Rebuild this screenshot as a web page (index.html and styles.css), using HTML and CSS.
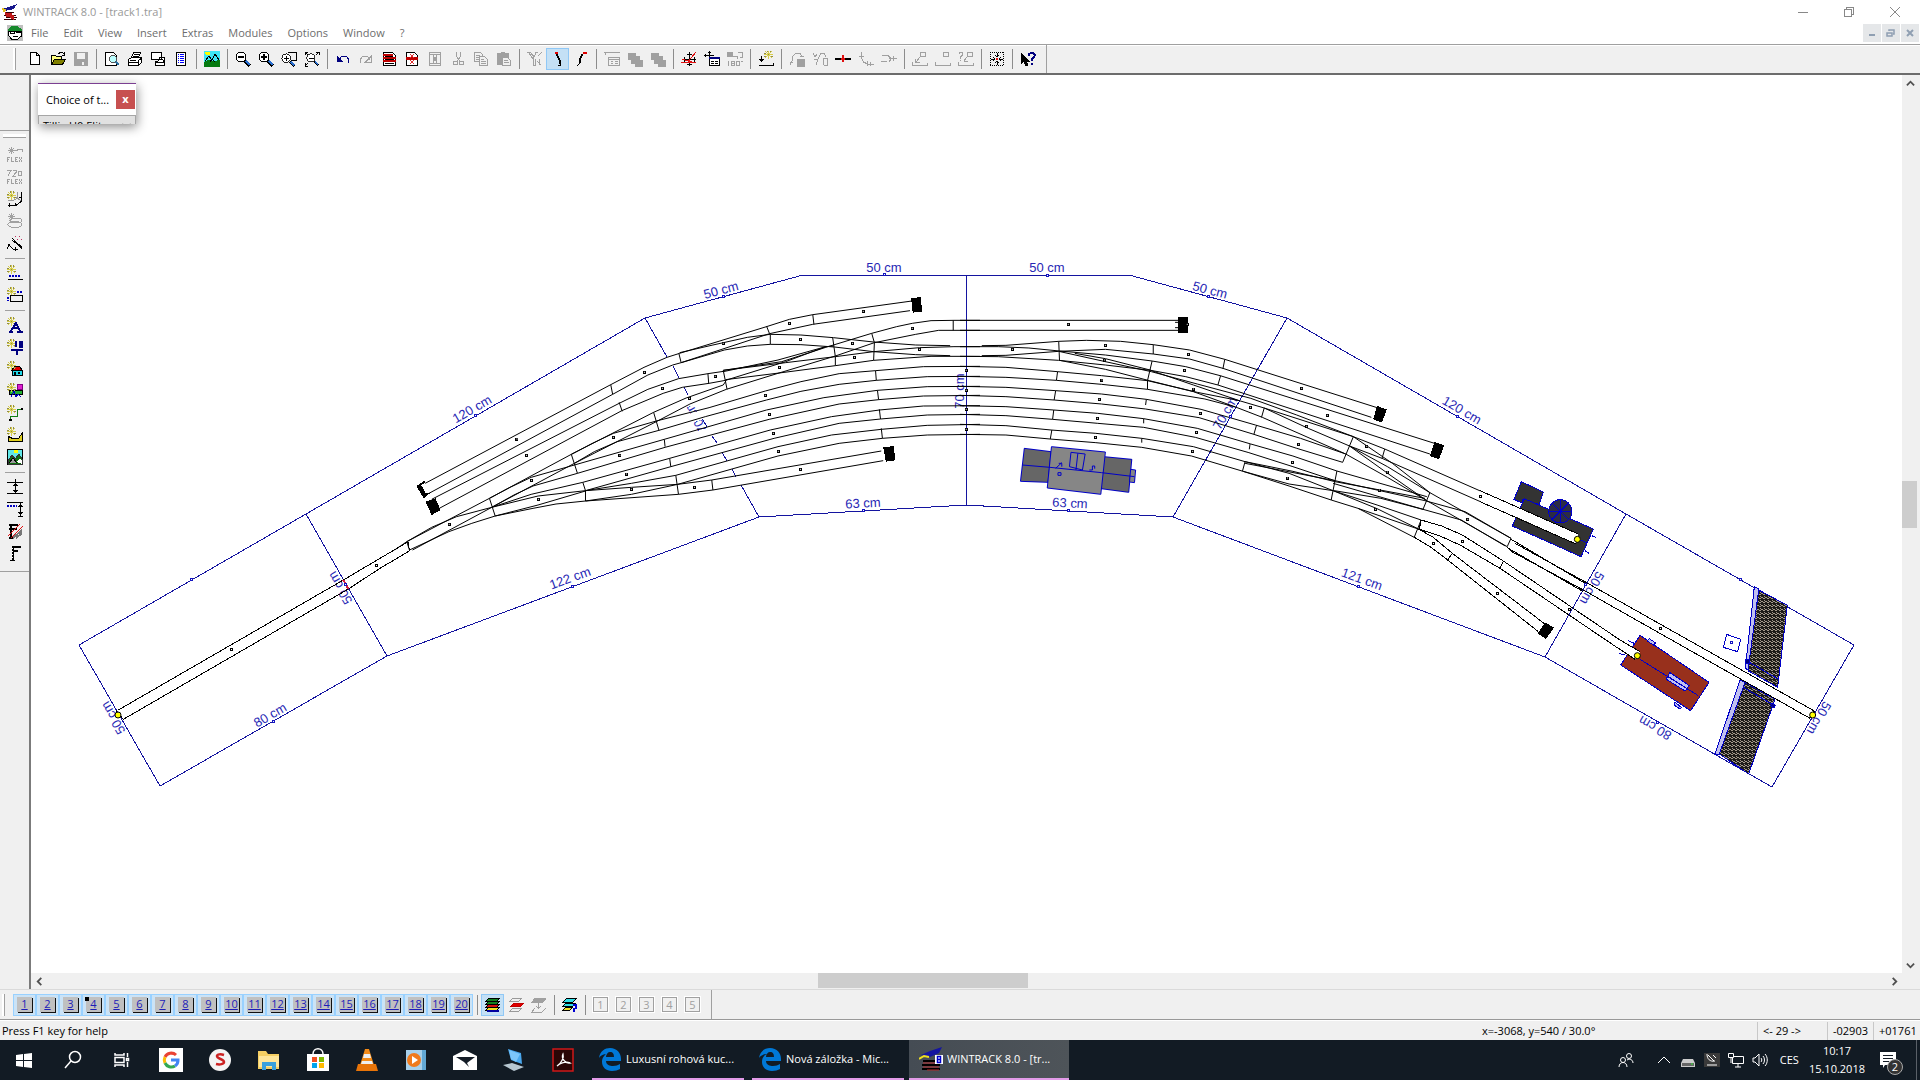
FILE: index.html
```html
<!DOCTYPE html>
<html lang="en">
<head>
<meta charset="utf-8">
<title>WINTRACK 8.0 - [track1.tra]</title>
<link rel="stylesheet" href="styles.css">
</head>
<body>
<svg class="defs" aria-hidden="true">
  <symbol id="star" viewBox="0 0 16 16"><path d="M4.500 0v9M0 4.500h9M1 1l7 7M8 1l-7 7" stroke="#d8cf4a"/><path d="M3 0v2M6 0v2M0 3h2M7 6h2M0 6h2M4 4h1" stroke="#8f8a4a"/></symbol>
  <symbol id="lens" viewBox="0 0 16 16"><circle cx="6" cy="6" r="5" stroke="#000" fill="#fff"/><path d="M10 10l5 5" stroke="#000" stroke-width="3"/><path d="M11 10l4 4" stroke="#2a6fd0" stroke-width="2"/></symbol>
  <symbol id="edge" viewBox="0 0 24 24"><path d="M1 11C2 4 7 1 12 1c7 0 11 5 11 11v2H8c0 4 4 5 7 5 3 0 5-1 7-2v5c-2 1-5 2-8 2C8 24 4 20 4 15c0-4 2-7 5-8-4 0-7 2-8 4zM8 10h8c0-3-1-5-4-5-2 0-4 2-4 5z" fill="#0078d7"/></symbol>
</svg>

<header class="titlebar">
  <svg class="logo" viewBox="0 0 16 16"><path d="M1 5l8-3 6-2-3 5-9 2z" fill="#16168c"/><path d="M0 5l3 1-1 2" stroke="#e0c020" stroke-width="2"/><path d="M4 8h8M2 11h12M4 13h11M2 15h12" stroke="#300"/><path d="M3 9l9 6M4 12h8M4 10h6" stroke="#c01818" stroke-width="2"/></svg>
  <h1>WINTRACK 8.0 - [track1.tra]</h1>
  <div class="winctl">
    <button aria-label="Minimize"><svg viewBox="0 0 12 12"><path d="M1 6.500h10"/></svg></button>
    <button aria-label="Restore"><svg viewBox="0 0 12 12"><path d="M1.500 3.500h7v7h-7zM3.500 3v-1.500h7v7h-1.500"/></svg></button>
    <button aria-label="Close"><svg class="smooth" viewBox="0 0 12 12"><path d="M1 1l10 10M11 1L1 11"/></svg></button>
  </div>
</header>

<nav class="menubar">
  <svg class="logo" viewBox="0 0 16 16"><path d="M0 0h16v16H0z" fill="#c0c0c0"/><path d="M1 4l4-3h5l5 3v2H1z" fill="#178a2c"/><path d="M2 6h12l1 4-5 5-6-1-3-5z" fill="#fff" stroke="#000"/><path d="M3 6h4v2H3zM9 6h4v1H9zM6 11h5M4 13l2 2M13 11l2 1" stroke="#000"/></svg>
  <button>File</button><button>Edit</button><button>View</button><button>Insert</button><button>Extras</button><button>Modules</button><button>Options</button><button>Window</button><button>?</button>
  <div class="mdictl">
    <button aria-label="Minimize document"><svg viewBox="0 0 10 10"><path d="M2 7h6" stroke-width="2"/></svg></button>
    <button aria-label="Restore document"><svg viewBox="0 0 10 10"><path d="M1 5h5v3H1zM3 3V2h5v4H7" stroke-width="1.500"/></svg></button>
    <button aria-label="Close document"><svg viewBox="0 0 10 10"><path d="M2 2l6 6M8 2L2 8" stroke-width="2"/></svg></button>
  </div>
</nav>

<div class="toolbar" role="toolbar" aria-label="Standard">
  <span class="grip"></span>
  <button aria-label="New"><svg viewBox="0 0 16 16"><path d="M3.500 1.500h6l3 3v9h-9zM9.500 1.500v3h3" fill="#fff"/></svg></button>
  <button aria-label="Open"><svg viewBox="0 0 16 16"><path d="M1.500 13.500v-9h4l1 1h5v3" fill="#ffff80"/><path d="M1.500 13.500l3-5h11l-3 5z" fill="#808000"/><path d="M8.500 2.500l2-1h2l2 2M14.500 1v3h-3"/></svg></button>
  <button aria-label="Save" disabled><svg viewBox="0 0 16 16"><path d="M1 1h14v14H1z" fill="#a0a0a0" stroke="none"/><path d="M4 2h8v6H4zM9 11h2v3H9z" fill="#f0f0f0" stroke="none"/></svg></button>
  <span class="sep"></span>
  <button aria-label="Print preview"><svg viewBox="0 0 16 16"><path d="M1.500 1.500h8l3 3v10h-11z" fill="#fff"/><circle cx="9" cy="8" r="3.500" fill="#bff" stroke="#555"/><path d="M12 11l3 3" stroke="#2a6fa0" stroke-width="2"/></svg></button>
  <button aria-label="Print"><svg viewBox="0 0 16 16"><path d="M4.500 6.500l2-5h7l-2 5M1.500 8.500l3-2h10v5l-3 3h-10z" fill="#fff"/><path d="M1 11.500h11M11.500 14V9M7 3.500h5M6 5.500h5M3 9.500h6M12 9l3-2"/></svg></button>
  <button aria-label="Print screens"><svg viewBox="0 0 16 16"><path d="M1.500 1.500h10v7h-10zM4.500 10.500h3M7.500 11.500l2-5h5l-1 5M5.500 11.500h9v3h-9z" fill="#fff"/><path d="M9 8.500h4M14 8l1 4"/></svg></button>
  <button aria-label="Parts list"><svg viewBox="0 0 16 16"><path d="M3.500 1.500h9v13h-9z" fill="#fff"/><path d="M5 3.500h1M7 3.500h4M5 5.500h1M7 5.500h4M5 7.500h1M7 7.500h4M5 9.500h1M7 9.500h4M5 11.500h1M7 11.500h4" stroke="#00f"/></svg></button>
  <span class="sep"></span>
  <button aria-label="3D view"><svg viewBox="0 0 16 16"><path d="M0 0h16v16H0z" fill="#3ee6f5" stroke="none"/><path d="M0 11l4-2 5 1 7-1v7H0z" fill="#067a10" stroke="none"/><path d="M1 1h5v3H2z" fill="#ff0" stroke="none"/><path d="M1 10l4-5 3 4 3-6 4 6M6 11l2-3 3 3"/></svg></button>
  <span class="sep"></span>
  <button aria-label="Zoom out"><svg viewBox="0 0 16 16"><use href="#lens"/><path d="M3 6h6" stroke-width="2"/></svg></button>
  <button aria-label="Zoom in"><svg viewBox="0 0 16 16"><use href="#lens"/><path d="M3 6h6M6 3v6" stroke-width="2"/></svg></button>
  <button aria-label="Zoom window"><svg viewBox="0 0 16 16"><path d="M6.500 1.500h9v8h-6" /><use href="#lens" y="2" width="14" height="14"/><path d="M3 7.500h5M5.500 5v5"/></svg></button>
  <button aria-label="Zoom all"><svg viewBox="0 0 16 16"><use href="#lens" x="2" y="2" width="13" height="13"/><path d="M5 7.500h5M1 4V1h3M12 1h3v3M1 12v3h3M1 1l3 3M15 1l-3 3M1 15l3-3"/></svg></button>
  <span class="sep"></span>
  <button aria-label="Undo"><svg viewBox="0 0 16 16"><path d="M4 9l2-3 3-1 3 1 2 3-1 3" stroke="#00007f"/><path d="M2 5v6h6z" fill="#00007f" stroke="none"/></svg></button>
  <button aria-label="Redo" disabled><svg viewBox="0 0 16 16"><path d="M12 9l-2-3-3-1-3 1-2 3 1 3M13.500 5v6h-6z"/></svg></button>
  <button aria-label="Delete track"><svg viewBox="0 0 16 16"><path d="M2.500 1.500h9l3 3v10h-12z" fill="#fff"/><path d="M2 4h10M2 7h13M2 10h13" stroke="#c00000" stroke-width="2"/><path d="M4 5.500h8M4 8.500h9M4 12.500h9"/></svg></button>
  <button aria-label="Delete section"><svg viewBox="0 0 16 16"><path d="M2.500 1.500h8l3 3v10h-11z" fill="#fff"/><path d="M2 7.500h12" stroke="#c00000" stroke-width="3"/><path d="M6 3l4 4M10 3L6 7M6 9l4 4M10 9l-4 4" stroke="#e03030"/></svg></button>
  <button aria-label="Select section" disabled><svg viewBox="0 0 16 16"><path d="M2.500 1.500h11v13h-11zM2 3.500h12M2 12.500h12M6 4l4 8M10 4l-4 8M6.500 4v8M9.500 4v8"/></svg></button>
  <button aria-label="Cut" disabled><svg viewBox="0 0 16 16"><path d="M6.500 1v4l3 5M10.500 1v4l-3 5"/><circle cx="5.500" cy="12" r="2"/><circle cx="11.500" cy="12" r="2"/></svg></button>
  <button aria-label="Copy" disabled><svg viewBox="0 0 16 16"><path d="M1.500 1.500h6l2 2v7h-8zM3 4.500h4M3 6.500h3M3 8.500h3"/><path d="M6.500 5.500h5l3 3v6h-8z" fill="#f0f0f0"/><path d="M8 8.500h3M8 10.500h5M8 12.500h5"/></svg></button>
  <button aria-label="Paste" disabled><svg viewBox="0 0 16 16"><path d="M1 2h4V1h4v1h4v12H1z" fill="#a0a0a0" stroke="none"/><path d="M6.500 6.500h5l3 3v5h-8z" fill="#f0f0f0"/><path d="M8 9.500h4M8 11.500h5"/></svg></button>
  <span class="sep"></span>
  <button aria-label="Turnout" disabled><svg viewBox="0 0 16 16"><path d="M0 1.500h4M2 2l4 6M8 1.500h3M9 2L6 8M4 2l3 4M6.500 8v6M8.500 8v6M6 14.500h3M11 5l4-4M12 8v6M10 10l4 4"/></svg></button>
  <button class="on" aria-label="Curve left"><svg viewBox="0 0 16 16"><path d="M7 3l3 6v5H8M6 3l3 6v4" /><path d="M5 2h3" stroke="#e00000" stroke-width="2"/></svg></button>
  <button aria-label="Curve right"><svg viewBox="0 0 16 16"><path d="M10 3L7 9v3l-3 3M9 3L6 9v4"/><path d="M10 2h4" stroke="#e00000" stroke-width="2"/></svg></button>
  <span class="sep"></span>
  <button aria-label="Properties" disabled><svg viewBox="0 0 16 16"><path d="M0 1.500h16M1.500 1v3M4.500 6.500h11v8h-11zM5 8h10M7 10.500h2M11 10.500h3M7 12.500h2M11 12.500h3"/></svg></button>
  <button aria-label="To front" disabled><svg viewBox="0 0 16 16"><path d="M1 2h7v3h4v4h3v6H8v-3H4V8H1z" fill="#a0a0a0"/></svg></button>
  <button aria-label="To back" disabled><svg viewBox="0 0 16 16"><path d="M1 2h7v3h4v4h3v6H8v-3H4V8H1z" fill="#a0a0a0"/></svg></button>
  <span class="sep"></span>
  <button aria-label="Move"><svg viewBox="0 0 16 16"><path d="M8.500 1v14M1 8.500h14M6 3.500h5M6 13.500h5M3.500 6v5M13.500 6v5"/><path d="M0 11.500h15M6 12L15 1M1 8l13 4" stroke="#e01010"/></svg></button>
  <button aria-label="Move by value"><svg viewBox="0 0 16 16"><path d="M5.500 0v10M0 4.500h10M4 1.500h3M1.500 3v3"/><path d="M5.500 6.500h10v8h-10z" fill="#fff"/><path d="M5 7h11" stroke="#00007f" stroke-width="2"/><path d="M7 10.500h3M11 10.500h3M7 12.500h3M11 12.500h3"/></svg></button>
  <button aria-label="Rotate by 180 degrees" disabled><svg viewBox="0 0 16 16"><path d="M0 1h6v5H0z" fill="#a0a0a0" stroke="none"/><path d="M10.500 1.500h5v5h-3M5 5.500h5v2M1.500 10v5M4.500 10.500h3v4h-3zM5 12.500h3M9.500 10.500h3v4h-3zM14 10h2"/></svg></button>
  <span class="sep"></span>
  <button aria-label="New start point"><svg viewBox="0 0 16 16"><use href="#star" x="6" y="-1" width="16" height="16"/><path d="M.5 14.500h15v-3M3.500 5v6M1 8.500h5M2 9.500h3M3 10.500h1"/></svg></button>
  <span class="sep"></span>
  <button aria-label="Replace track" disabled><svg viewBox="0 0 16 16"><path d="M1 14l2-4 1-5 3-3M1 11h3M7 2h4l2 4M11 5h4" /><path d="M8 8h7v7H8z" fill="#a0a0a0"/></svg></button>
  <button aria-label="Split track" disabled><svg viewBox="0 0 16 16"><path d="M1 2l2 4 2-3M4 14l2-6 3-6M8 2h4l2 4M2 8h3M11 7h4v7h-3z"/></svg></button>
  <button aria-label="Joint"><svg viewBox="0 0 16 16"><path d="M0 8h16" stroke-width="2"/><path d="M8 4v7M6 8h4" stroke="#e01010" stroke-width="2"/></svg></button>
  <button aria-label="Connect with curve" disabled><svg viewBox="0 0 16 16"><path d="M1 5.500h5M3.500 1v6l2 4 4 2h7M9.500 10v5M12.500 11v4"/></svg></button>
  <button aria-label="Gap" disabled><svg viewBox="0 0 16 16"><path d="M1 4.500h6l2 3M0 10.500h6M8 5l2 3-2 3M9 7.500h7M12.500 5v5"/></svg></button>
  <span class="sep"></span>
  <button aria-label="Height" disabled><svg viewBox="0 0 16 16"><path d="M8.500 1.500h5v4h-5zM8 6l-4 5M3.500 8v3h4M.5 11v3.500h15v-3"/></svg></button>
  <button aria-label="Level" disabled><svg viewBox="0 0 16 16"><path d="M8.500 1.500h5v4h-5zM.5 11v3.500h15v-3"/></svg></button>
  <button aria-label="Height query" disabled><svg viewBox="0 0 16 16"><path d="M9.500 1.500h5v4h-5zM9 6l-3 4M.5 11v3.500h15v-3M1.500 3V1.500h3v3l-2 1v2M2.500 8.500v1M6.500 8v2h3"/></svg></button>
  <span class="sep"></span>
  <button aria-label="Centre"><svg viewBox="0 0 16 16"><path d="M1 1.500h14M1 14.500h14M1.500 1v14M14.500 1v14" stroke-dasharray="1 1"/><path d="M8 2v4M8 10v4M2 8h4M10 8h4M6 4l2 2 2-2M6 12l2-2 2 2M4 6l2 2-2 2M12 6l-2 2 2 2"/><path d="M7 8h2" stroke="#e01010" stroke-width="2"/></svg></button>
  <span class="sep"></span>
  <button aria-label="Context help"><svg viewBox="0 0 16 16"><path d="M1 2v11l3-3 2 5 2-1-2-4h3z" fill="#000"/><path d="M9 5V3l2-1h2l2 2-1 2-2 2v2M12 12v2" stroke="#00007f" stroke-width="2"/></svg></button>
  <span class="end"></span>
</div>

<main class="workspace">
  <aside class="sidebar" role="toolbar" aria-label="Insert">
    <span class="hgrip"></span>
    <button aria-label="Flex track" disabled><svg viewBox="0 0 16 16"><path d="M4.500 0v7M1 3.500h7M2 1l5 5M7 1L2 6M8 4l5-2h2v3M.5 10v5M1 10.500h2M1 12.500h1M4.500 10v4.500h2M8.500 10v5M9 10.500h2M9 12.500h1M9 14.500h2M12.500 10v2M14.500 10v2M13.500 12v1M12.500 13v2M14.500 13v2"/></svg></button>
    <button aria-label="Flex track with radius" disabled><svg viewBox="0 0 16 16"><path d="M0 1.500h4L1 7M6 1.500h3v2L6 7h3M11.500 2.500h3v4h-3zM.5 10v5M1 10.500h2M1 12.500h1M4.500 10v4.500h2M8.500 10v5M9 10.500h2M9 12.500h1M9 14.500h2M12.500 10v2M14.500 10v2M13.500 12v1M12.500 13v2M14.500 13v2"/></svg></button>
    <button aria-label="Parallel track"><svg viewBox="0 0 16 16"><path d="M1 9.500h5l4-2V1M9 6l5 4" stroke="#999"/><use href="#star"/><path d="M1 14.500h8l5-4V1M2.500 12v4M8.500 12v3M12 6h3"/></svg></button>
    <button aria-label="Helix" disabled><svg viewBox="0 0 16 16"><path d="M4.500 0v7M1 3.500h7M2 1l5 5M7 1L2 6"/><ellipse cx="9" cy="7.500" rx="6" ry="2.500"/><ellipse cx="8" cy="11.500" rx="7" ry="3"/></svg></button>
    <button aria-label="Wizard"><svg viewBox="0 0 16 16"><path d="M5 4l10 9" stroke-width="2"/><path d="M5 4l2 2" stroke="#fff"/><path d="M1 9l5 5h5M8.500 12v4M0 14l3-5"/><path d="M8 1h1M12 1h1M14 4h1M10 4h1" stroke="#c03060"/></svg></button>
    <span class="hsep"></span>
    <button aria-label="Line"><svg viewBox="0 0 16 16"><use href="#star"/><path d="M1 14.500h15"/><path d="M2 11h12" stroke="#0000c0" stroke-width="2" stroke-dasharray="2 1"/></svg></button>
    <button aria-label="Rectangle"><svg viewBox="0 0 16 16"><use href="#star"/><path d="M3.500 8.500h12v6h-12z"/><path d="M1 10v4M10 5h5" stroke="#0000c0" stroke-width="2" stroke-dasharray="2 1"/></svg></button>
    <span class="hsep"></span>
    <button aria-label="Text"><svg viewBox="0 0 16 16"><use href="#star"/><path d="M4 14l5-8 4 8M6 11h6M2 15h4M10 15h6" stroke="#00007f" stroke-width="2"/></svg></button>
    <button aria-label="Dimension"><svg viewBox="0 0 16 16"><use href="#star"/><path d="M9 2v6M12.500 2.500h2v5h-2z" stroke="#00007f" stroke-width="2"/><path d="M4 11h12M10 11v5" stroke="#00007f" stroke-width="2"/></svg></button>
    <button aria-label="Building"><svg viewBox="0 0 16 16"><path d="M5.500 9.500h10v5h-10z" fill="#20d8e8"/><path d="M4.500 9.500l3-4h5l3 4z" fill="#e00000"/><path d="M8 11v3M12 11v2" stroke-width="2"/><use href="#star"/></svg></button>
    <button aria-label="Landscape item"><svg viewBox="0 0 16 16"><path d="M2 7h13v4H2z" fill="#20b030"/><circle cx="13" cy="4" r="3" fill="#e020d0" stroke="#800080"/><use href="#star"/><path d="M4 14l3-6 2 6 2-3 3 3" stroke="#0000c0"/></svg></button>
    <button aria-label="Cable"><svg viewBox="0 0 16 16"><use href="#star"/><path d="M3.500 14v-2.500h7v-7h5" stroke="#108010"/><path d="M2 15h3M14 4h2" stroke-width="2"/></svg></button>
    <button aria-label="Contour"><svg viewBox="0 0 16 16"><path d="M1.500 9.500l4 2h6l4-6v9h-14z" fill="#e0d020"/><use href="#star"/></svg></button>
    <button aria-label="Picture"><svg viewBox="0 0 16 16"><path d="M.5 .5h15v15H.5z" fill="#60e8e8"/><path d="M1 12l4-6 3 4 4-5 3 5v5H1z" fill="#107010" stroke="#333"/><path d="M7 1h4v3H7z" fill="#ff0" stroke="none"/><path d="M2 14l4-5 4 5" fill="#999"/><path d="M10 13l3-4 2 3v3z" fill="#fff" stroke="none"/></svg></button>
    <span class="hsep"></span>
    <button aria-label="Vertical distance"><svg viewBox="0 0 16 16"><path d="M0 3.500h16M0 14.500h16M8.500 0v14M6 6.500h5M7 5.500h3M6 11.500h5M7 12.500h3"/></svg></button>
    <button aria-label="Clearance"><svg viewBox="0 0 16 16"><path d="M0 1.500h16M13.500 2v13M11 5.500h5M12 4.500h3M11 11.500h5M12 12.500h3M11 15.500h5"/><path d="M0 5h10" stroke="#0000c0" stroke-width="2" stroke-dasharray="2 1"/></svg></button>
    <button aria-label="Hide signals"><svg viewBox="0 0 16 16"><path d="M4 2v13M2 2h9M2 6h8M2 15h5" stroke-width="2"/><path d="M6 15l9-8M9 15l6-5" stroke="#777" stroke-width="2"/><path d="M1 13L13 1M4 15L16 3" stroke="#e01010"/></svg></button>
    <button aria-label="Signal"><svg viewBox="0 0 16 16"><path d="M6 1v14M3 15.500h5M5 2h9M5 5.500h6" stroke-width="2"/><path d="M5.500 3v11" stroke="#fff" stroke-dasharray="1 2"/></svg></button>
    <span class="hend"></span>
  </aside>

  <section class="document">
    <svg class="plan" viewBox="31 75 1871 898" role="img" aria-label="Track plan">
      <defs>
        <pattern id="gravel" width="12" height="12" patternUnits="userSpaceOnUse"><path d="M0 0h12v12H0z" fill="#1d1b18"/><path d="M1 0h2v1h1v2h-1v-1h-2zM6 1h1v2h2v1h-3zM10 0h1v3h-1zM0 4h1v3h2v1h-3zM4 5h2v1h1v2h-1v-1h-2zM9 5h2v2h-1v2h-1zM2 9h2v1h1v2h-1v-1h-2zM7 9h1v2h2v1h-3zM11 9h1v2h-1zM3 3h1v1h-1zM8 8h1v1h-1z" fill="#a2988a" stroke="none"/></pattern>
      </defs>

      <!-- baseboards -->
      <g class="blue">
        <path d="M79 645L306 514 645 318 803 275H1129L1287 318 1626 514 1854 645 1772 787 1545 657 1173 517 966 505 759 517 387 656 160 786z"/>
        <path d="M306 514L387 656M966 275V505M1287 318L1173 517M1626 514L1545 657"/>
        <path d="M645 318L667 357M673 366L679 378M684 387L688 395M702 418L707 427M712 436L717 443M722 452L727 461M732 469L736 477M741 485L759 517"/>
      </g>
      <g class="dim">
        <text transform="translate(884 267)">50 cm</text>
        <text transform="translate(1047 267)">50 cm</text>
        <text transform="translate(721 290) rotate(-15)">50 cm</text>
        <text transform="translate(1210 290) rotate(15)">50 cm</text>
        <text transform="translate(472 409) rotate(-30)">120 cm</text>
        <text transform="translate(1462 410) rotate(30)">120 cm</text>
        <text transform="translate(270 715) rotate(-30)">80 cm</text>
        <text transform="translate(1655 728) rotate(210)">80 cm</text>
        <text transform="translate(570 578) rotate(-20)">122 cm</text>
        <text transform="translate(1362 579) rotate(20)">121 cm</text>
        <text transform="translate(863 503) rotate(-3)">63 cm</text>
        <text transform="translate(1070 503) rotate(3)">63 cm</text>
        <text transform="translate(959 391) rotate(-90)">70 cm</text>
        <text transform="translate(1225 413) rotate(-60)">70 cm</text>
        <text transform="translate(695 417) rotate(-120)">70 cm</text>
        <text transform="translate(340 588) rotate(-120)">50 cm</text>
        <text transform="translate(113 718) rotate(-120)">50 cm</text>
        <text transform="translate(1592 588) rotate(120)">50 cm</text>
        <text transform="translate(1819 718) rotate(120)">50 cm</text>
      </g>
      <path class="cover" d="M660 428L730 406M668 445L735 424M680 405L720 391"/>

      <!-- left approach -->
      <svg x="60" y="440" width="380" height="360" viewBox="0 0 1140 1080">
        <path class="rail" d="M175 810L850 420 960 355 1045 305M190 838L865 447 960 385 1048 333M1045 305L1048 333M168 812L190 838"/>
        <path class="red" d="M850 420L865 447"/>
        <g class="dot"><path id="d1" d="M514 628h0M949 376h0"/></g><use href="#d1" class="pin"/>
        <circle class="lamp" cx="174" cy="825" r="9"/>
      </svg>

      <!-- station throat, left half -->
      <svg x="380" y="250" width="600" height="300" viewBox="0 0 1568 900" preserveAspectRatio="none">
        <path class="rail" d="M118 700L603 404 690 352 750 322 783 310 1010 230 1070 208 1131 194 1390 153M128 730L608 433 700 375 765 345 787 338 1018 251 1131 223 1385 182"/>
        <path class="rail" d="M783 308L870 285 960 262 1020 253 1100 255 1185 263 1290 276 1400 285 1490 287M787 338L900 300 960 288 1020 283 1100 284 1188 291 1290 305 1400 314 1490 317"/>
        <path class="rail" d="M135 748L625 460 700 418 780 386 857 371 898 364M155 775L632 482 740 430 790 412 860 400 903 391"/>
        <path class="rail" d="M897 361L1050 335 1165 292 1285 250 1350 230 1391 220 1440 212 1500 211H1568M905 418L1040 370 1190 318 1292 278 1400 253 1460 241H1568"/>
        <path class="rail" d="M897 361L1060 338 1190 320 1290 305 1410 293 1500 290H1568M903 389L1050 368 1190 347 1290 331 1440 319H1568M903 391L1060 335 1165 290M897 365L1040 330 1165 290 1185 288"/>
        <path class="rail" d="M38 900L70 875 286 745 500 613 715 487 800 444 897 405 905 391M85 900L292 772 508 640 722 515 810 462 905 418"/>
        <path class="rail" d="M70 875L135 832 200 800 292 772 395 733 530 697M77 900L180 845 240 820 301 798 413 765 537 723"/>
        <path class="rail" d="M286 745L340 712 395 682 508 645M292 772L350 735 400 708 516 670M500 613L555 580 610 550 722 513M508 640L560 605 620 575 729 541"/>
        <path class="rail" d="M292 772L413 738 537 722 657 712 778 703M301 798L400 775 460 762 537 753 780 733M537 722L657 700 773 676M537 753L657 733 778 703"/>
        <path class="rail" d="M778 703L867 690 1310 603M780 733L870 720 1315 632"/>
        <path class="rail" d="M722 513L860 473 1007 423 1100 395 1200 371 1295 362 1420 350 1568 349M729 541L850 500 1010 450 1100 424 1200 403 1297 391 1430 380 1568 379"/>
        <path class="rail" d="M508 645L743 568 1010 480 1160 443 1300 421 1430 410 1568 409M516 670L745 592 1017 508 1200 462 1303 449 1420 438 1568 436"/>
        <path class="rail" d="M530 697L757 625 1020 540 1180 500 1305 480 1420 468 1568 467M537 722L760 650 1030 565 1200 520 1308 507 1430 495 1568 493"/>
        <path class="rail" d="M773 676L1040 590 1180 555 1310 538 1430 526 1568 523M778 703L1040 618 1200 580 1313 565 1430 555 1568 553"/>
        <path class="rail" d="M603 404L608 433M781 310L787 338M1010 228L1018 251M1020 253V283M1131 194L1134 223M625 457L633 484M857 371L859 400M897 361L907 418M1183 263L1190 320V347M1285 250L1292 278 1290 331M1498 211V241M70 875L77 900M286 745L301 798M500 613L516 670M715 487L729 541M530 697L537 722V753M773 676L780 733M867 690L870 720M743 568L745 590M757 625L760 650M1295 362L1297 391M1300 421L1303 449M1305 478L1308 507M1310 535L1313 565"/>
        <path class="stop" d="M1388 145L1413 141 1417 185 1392 188zM1315 592L1342 588 1347 631 1322 635zM95 708L116 692 119 697 108 706 120 730 130 730 114 745zM119 755L145 745 158 780 135 795z"/>
        <g class="dot"><path id="d2" d="M691 367h0M358 567h0M383 616h0M738 415h0M876 379h0M897 280h0M1070 220h0M1263 184h0M1099 268h0M1235 280h0M1391 235h0M1240 322h0M1044 352h0M1410 298h0M809 445h0M1007 436h0M610 562h0M627 616h0M644 672h0M396 691h0M181 823h0M414 748h0M657 718h0M822 712h0M1099 658h0M1041 604h0M1028 550h0M1018 493h0M1532 361h0M1532 421h0M1532 478h0M1532 538h0"/></g><use href="#d2" class="pin"/>
      </svg>

      <!-- station throat, right half -->
      <svg x="960" y="250" width="600" height="320" viewBox="0 0 1568 960" preserveAspectRatio="none">
        <g class="shed">
          <path fill="#666" d="M168 595L238 605 230 697 158 694zM376 620L449 628 441 727 368 716z"/>
          <path fill="#868686" d="M239 590L380 606 368 733 228 714zM446 658L459 660 456 698 443 696z"/>
          <path fill="none" d="M163 645L235 652 370 668 456 680M290 607L327 612 320 660 286 650zM308 610L303 660M250 655L266 638M258 640h8v10M338 660h8v-12h6v8M256 668h8v8h-8z"/>
        </g>
        <path class="rail" d="M0 211H570M0 241H570M562 217h10M562 233h10"/>
        <path class="rail" d="M57 287L120 286 258 274 330 271 420 274 505 284 600 300 692 328 1090 473M57 317L120 316 258 304 380 298 505 312 600 327 687 355 1075 502"/>
        <path class="rail" d="M0 290L100 290 180 294 260 303 380 315 502 333 590 350 680 377 1240 580M0 319L100 320 258 331 380 345 498 361 590 380 674 405 1228 612"/>
        <path class="rail" d="M258 304L380 335 500 365 620 402 760 445 880 495 1028 560 1110 597 1360 723M260 331L380 358 495 392 610 425 720 471M498 361L610 405 730 452M300 310L380 326 500 361"/>
        <path class="rail" d="M0 349L120 352 255 365 370 377 490 392 620 427 730 452 795 474 910 535 1018 588 1103 625 1360 755M0 379L120 382 252 391 370 403 490 418 640 447 720 471 790 502 1008 612"/>
        <path class="rail" d="M0 409L120 412 250 422 370 432 487 448 630 478 772 525 890 565 1008 612M0 436L120 440 246 450 370 462 485 477 625 503 768 553 880 595 1000 637"/>
        <path class="rail" d="M0 467L120 470 245 480 360 490 480 506 620 535 760 582 870 618 985 663 1220 740M0 493L120 497 242 508 360 520 480 532 615 562 755 608 870 650 980 692 1215 752"/>
        <path class="rail" d="M0 523L120 527 238 540 355 550 475 565 610 590 745 635 870 664 980 695M0 553L120 555 235 567 355 578 475 592 605 618 740 664 860 708 970 750"/>
        <path class="rail" d="M795 474L1028 560 1130 640 1228 728 1440 865M1018 588L1117 650 1228 728M1008 612L1117 682 1220 752 1430 890M1018 588L1120 672 1220 752M1215 752L1320 785 1440 865M1210 778L1310 810 1425 888"/>
        <path class="rail" d="M745 635L860 670 975 722M740 664L860 702 975 722M745 640L980 692M980 695L1215 745M978 722L1100 745 1210 778M975 700L1210 778M975 722L1090 765 1205 810M970 750L1040 775 1187 862M975 722L1090 776 1200 838M1040 775L1200 838"/>
        <path class="rail" d="M258 274L260 331M505 284V312M692 328L687 357M502 333L490 392V418M681 377L674 405M795 474L788 502M1110 597L1103 625M1028 560L1000 637M1228 728L1210 778M1440 865L1430 890M255 365L252 391M250 422L246 450M487 448L485 465M775 525L768 553M245 480L242 508M480 506V520M758 582L756 598M985 663L970 750M240 540L236 567M475 565V578M745 635L738 664M1205 810L1187 862"/>
        <path class="stop" d="M570 201H596V248H570zM1090 468L1115 478 1103 518 1080 508zM1240 576L1265 586 1252 628 1228 618z"/>
        <g class="dot"><path id="d3" d="M283 223h0M594 223h0M380 286h0M137 298h0M378 330h0M597 313h0M587 361h0M371 390h0M610 417h0M893 415h0M960 496h0M759 472h0M906 529h0M1063 589h0M1360 739h0M364 448h0M628 490h0M885 583h0M1117 666h0M359 505h0M618 547h0M869 637h0M354 562h0M608 604h0M856 684h0M1096 720h0M1086 778h0M1327 808h0"/></g><use href="#d3" class="pin"/>
      </svg>

      <!-- lower right yard -->
      <svg x="1260" y="460" width="380" height="280" viewBox="0 0 1140 840">
        <path class="rail" d="M483 180L545 198 607 225 730 303 1080 540M478 208L540 228 600 255 720 325 1060 555M475 207L520 232 577 280 852 490M463 232L510 260 563 300 835 515M483 180L478 208M730 303L720 325M577 280L563 300M752 237L975 370M740 262L970 395"/>
        <path class="stop" d="M855 487L882 503 858 537 833 520z"/>
        <g class="dot"><path id="d4" d="M521 250h0M607 244h0M712 400h0M928 448h0"/></g><use href="#d4" class="pin"/>
      </svg>

      <!-- right approach and scenery -->
      <svg x="1480" y="450" width="400" height="350" viewBox="0 0 1200 1050">
        <g class="shed">
          <path fill="#333" d="M124 95L190 126 178 163 128 150 128 160 102 148z"/>
          <path fill="#333" d="M133 146L340 237 303 320 97 228z"/>
          <circle fill="#2c2c44" cx="241" cy="184" r="35"/>
          <path d="M206 184h70M241 149v70M216 159l50 50M266 159l-50 50M335 257l12 5M315 302l12 8M296 268l25 10"/>
          <path fill="#98301c" d="M480 556L687 697 632 782 422 645z"/>
          <path fill="#c0c0f0" d="M570 668L628 707 615 723 558 687zM508 566L527 579 520 585 502 573zM585 757L605 773 600 777 582 765z"/>
          <path d="M480 628L655 737M445 572l18 8M417 610l18 5M562 678L620 715"/>
          <path fill="#c0c0f0" d="M823 410L836 417 808 662 796 655zM780 690L795 697 718 914 705 912z"/>
          <path fill="url(#gravel)" d="M836 420L922 466 893 712 804 662zM795 697L885 748 806 972 718 912z"/>
          <path d="M800 632L895 688M790 712L882 766"/>
          <path fill="#fff" d="M740 553L782 568 773 605 730 592z"/>
          <path fill="#00007f" d="M797 628h12v12h-12zM874 760l12 5-4 8-10-5z"/>
        </g>
        <path fill="#fff" d="M60 146L295 252 288 282 55 176zM430 573L482 605 470 628 425 604z"/>
        <path class="rail" d="M0 122L295 252M0 155L288 282M420 570L480 605M400 585L465 628"/>
        <path class="rail" d="M105 280L318 397 1003 783M90 302L310 420 990 805M1003 783L990 805"/>
        <g class="dot"><path id="d5" d="M2 139h0M52 430h0M541 535h0"/></g><use href="#d5" class="pin"/>
        <circle class="lamp" cx="292" cy="268" r="9"/><circle class="lamp" cx="472" cy="617" r="9"/><circle class="lamp" cx="998" cy="795" r="9"/>
      </svg>

      <g class="dot bluedots"><path id="d6" d="M884 274h0M1047 275h0M723 296h0M475 415h0M191 579h0M273 721h0M572 586h0M863 510h0M1068 510h0M1208 296h0M1457 416h0M1740 579h0M1230 416h0M1358 586h0M1585 584h0M1657 722h0M345 584h0M1731 642h0"/></g><use href="#d6" class="pin"/>
    </svg>

    <div class="vscroll">
      <button aria-label="Scroll up"><svg viewBox="0 0 10 10"><path d="M1 7l4-4 4 4"/></svg></button>
      <span class="vthumb"></span>
      <button aria-label="Scroll down"><svg viewBox="0 0 10 10"><path d="M1 3l4 4 4-4"/></svg></button>
    </div>
    <div class="hscroll">
      <button aria-label="Scroll left"><svg viewBox="0 0 10 10"><path d="M7 1L3 5l4 4"/></svg></button>
      <span class="hthumb"></span>
      <button aria-label="Scroll right"><svg viewBox="0 0 10 10"><path d="M3 1l4 4-4 4"/></svg></button>
    </div>

    <div class="palette">
      <div class="palette-head"><span>Choice of t...</span><button aria-label="Close palette">x</button></div>
      <button class="palette-select"><span>Tillig H0 Elite</span><svg viewBox="0 0 10 10"><path d="M1 3l4 4 4-4"/></svg></button>
    </div>
  </section>
</main>

<div class="layerbar" role="toolbar" aria-label="Layers">
  <span class="grip"></span>
  <button class="layer"><b>1</b></button><button class="layer"><b>2</b></button><button class="layer"><b>3</b></button><button class="layer current"><b>4</b></button><button class="layer"><b>5</b></button><button class="layer"><b>6</b></button><button class="layer"><b>7</b></button><button class="layer"><b>8</b></button><button class="layer"><b>9</b></button><button class="layer"><b>10</b></button><button class="layer"><b>11</b></button><button class="layer"><b>12</b></button><button class="layer"><b>13</b></button><button class="layer"><b>14</b></button><button class="layer"><b>15</b></button><button class="layer"><b>16</b></button><button class="layer"><b>17</b></button><button class="layer"><b>18</b></button><button class="layer"><b>19</b></button><button class="layer"><b>20</b></button>
  <span class="sep"></span>
  <button class="on" aria-label="All layers"><svg viewBox="0 0 16 16"><path d="M4 1h11l-3 3H1z" fill="#108020"/><path d="M4 4h11l-3 3H1z" fill="#108020"/><path d="M4 7h11l-3 3H1z" fill="#d01010"/><path d="M4 10h11l-3 3H1z" fill="#f0e020"/><path d="M2 14h12" stroke="#0000a0" stroke-width="2"/></svg></button>
  <button aria-label="Active layer"><svg viewBox="0 0 16 16"><path d="M4.500 1.500h9l-3 3h-9zM4.500 11.500h9l-3 3h-9z" stroke="#999"/><path d="M5.500 6.500h10l-3 3h-10z" fill="#e00000" stroke="#c00000"/></svg></button>
  <button aria-label="Move to layer" disabled><svg viewBox="0 0 16 16"><path d="M4 1h11l-3 4H1z" fill="#a0a0a0"/><path d="M7.500 6v5M5 9l2.500 2L10 9M4 11l-3 4h10l4-4"/></svg></button>
  <span class="sep"></span>
  <button aria-label="Layer settings"><svg viewBox="0 0 16 16"><path d="M5 1h10l-4 4H1z" fill="#30e0e8"/><path d="M4 6h10l-3 3H1z" fill="#30e0e8"/><path d="M4 10h7l-3 3H1z" fill="#f0e020"/><path d="M11 8h3v3l-2 1v3" stroke="#0000d0" stroke-width="2"/></svg></button>
  <span class="sep"></span>
  <button class="view" disabled><i>1</i></button><button class="view" disabled><i>2</i></button><button class="view" disabled><i>3</i></button><button class="view" disabled><i>4</i></button><button class="view" disabled><i>5</i></button>
  <span class="end"></span>
</div>

<div class="statusbar">
  <span class="hint">Press F1 key for help</span>
  <span class="coords">x=-3068, y=540 / 30.0°</span>
  <span class="cell c1">&lt;- 29 -&gt;</span>
  <span class="cell c2">-02903</span>
  <span class="cell c3">+01761</span>
</div>

<footer class="taskbar">
  <div class="pins">
    <button aria-label="Start"><svg viewBox="0 0 24 24"><path d="M4 7l7-1v6H4zM12 6l8-1v7h-8zM4 13h7v6l-7-1zM12 13h8v7l-8-1z" fill="#fff"/></svg></button>
    <button aria-label="Search"><svg viewBox="0 0 24 24"><circle cx="14" cy="9" r="5.500" stroke="#fff" stroke-width="1.500"/><path d="M10 13l-6 7" stroke="#fff" stroke-width="1.500"/></svg></button>
    <button aria-label="Task view"><svg viewBox="0 0 24 24"><path d="M5 5v2h9V5M5 19v-2h9v2M5 9.500h9v5H5zM17.500 5v4M17.500 14v5M16.500 10.500h2v2h-2z" stroke="#fff" stroke-width="1.500"/></svg></button>
    <button aria-label="Google"><svg viewBox="0 0 24 24"><path d="M0 0h24v24H0z" fill="#fff"/><path d="M17 7a7 7 0 0 0-11 2" stroke="#ea4335" stroke-width="3"/><path d="M6 9a7 7 0 0 0 0 6" stroke="#fbbc05" stroke-width="3"/><path d="M6 15a7 7 0 0 0 10 3" stroke="#34a853" stroke-width="3"/><path d="M16 18a7 7 0 0 0 3-6h-7" stroke="#4285f4" stroke-width="3"/></svg></button>
    <button aria-label="Seznam"><svg viewBox="0 0 24 24"><circle cx="12" cy="12" r="11" fill="#f4f4f4"/><path d="M16 7c-3-1-7-1-7 1 0 3 7 3 7 6 0 2-4 3-8 2" stroke="#c22" stroke-width="2.500"/></svg></button>
    <button aria-label="File Explorer"><svg viewBox="0 0 24 24"><path d="M1 3h8l2 3h11v15H1z" fill="#f5cf63"/><path d="M2 8h20v11H2z" fill="#ffe69a"/><path d="M5 22v-8h14v8h-4v-4H9v4z" fill="#39a0dc"/></svg></button>
    <button aria-label="Store"><svg viewBox="0 0 24 24"><path d="M7 6c0-7 10-7 10 0" stroke="#fff" stroke-width="1.500"/><path d="M1 6h22v17H1z" fill="#fff"/><path d="M6 9h5v5H6z" fill="#f25022"/><path d="M13 9h5v5h-5z" fill="#7fba00"/><path d="M6 15h5v5H6z" fill="#00a4ef"/><path d="M13 15h5v5h-5z" fill="#ffb900"/></svg></button>
    <button aria-label="VLC"><svg viewBox="0 0 24 24"><path d="M10 1h4l5 16H5z" fill="#f48b17"/><path d="M9 6h6l1 4H8zM7 13h10l1 3H6z" fill="#eee"/><path d="M3 16h18l2 7H1z" fill="#e87408"/></svg></button>
    <button aria-label="Media Player"><svg viewBox="0 0 24 24"><path d="M5 2h17v20H5z" fill="#62a8d4"/><path d="M2 2h16v20H2z" fill="#a8d0ea"/><circle cx="10" cy="12" r="7" fill="#f07a1c"/><path d="M8 8l6 4-6 4z" fill="#fff"/></svg></button>
    <button aria-label="Mail"><svg viewBox="0 0 24 24"><path d="M0 8l12-6 12 6v14H0z" fill="#fff"/><path d="M3 9h19l-8 6 2 4-5-5z" fill="#141c26"/></svg></button>
    <button aria-label="This PC"><svg viewBox="0 0 24 24"><path d="M6 1l13 4 1 11-11-4z" fill="#4aa8ee"/><path d="M7 2l11 4-4 8-5-3z" fill="#7cc6fa"/><path d="M1 17l9-2 12 4-10 4z" fill="#b8c8d2"/></svg></button>
    <button aria-label="Acrobat"><svg viewBox="0 0 24 24"><path d="M2 1h20v22H2z" fill="#2a0606" stroke="#d01818" stroke-width="1.500"/><path d="M6 18c5-3 7-9 6-12-2 4 2 10 7 9-4-2-10 0-13 3z" stroke="#fff" stroke-width="1.300"/></svg></button>
  </div>
  <button class="task"><svg viewBox="0 0 24 24"><use href="#edge"/></svg><span>Luxusní rohová kuc...</span></button>
  <button class="task"><svg viewBox="0 0 24 24"><use href="#edge"/></svg><span>Nová záložka - Mic...</span></button>
  <button class="task active"><svg viewBox="0 0 24 24"><path d="M2 8l9-4 12-4-3 6-9 4z" fill="#1414a0"/><path d="M0 12l5-3 5 1" stroke="#f0e020" stroke-width="2"/><path d="M4 14h12M3 18h18M3 22h18" stroke="#000" stroke-width="2"/><path d="M4 16h13M4 20h16M8 23h12" stroke="#b02828" stroke-width="1"/><path d="M16 8h8v9h-8z" fill="#fff"/><path d="M18.500 9.500h3v6h-3zM18 12.500h4" stroke="#00c" stroke-width="1.500"/></svg><span>WINTRACK 8.0 - [tr...</span></button>
  <div class="tray">
    <svg class="people" viewBox="0 0 16 16"><circle cx="5" cy="8" r="2.500"/><path d="M1 15c0-6 8-6 8 0"/><circle cx="11" cy="4" r="2.500"/><path d="M9 8c3-2 6 0 6 3"/></svg>
    <svg viewBox="0 0 16 16"><path d="M2 11l6-6 6 6"/></svg>
    <svg viewBox="0 0 16 16"><path d="M3 7h10l2 4v4H1v-4z" fill="#ccc" stroke="none"/><path d="M2 11h12v3H2z" fill="#666" stroke="none"/><path d="M11 12h2" stroke="#3e3"/></svg>
    <svg viewBox="0 0 16 16"><path d="M0 1h16v14H0z" fill="#3a3a3a" stroke="none"/><path d="M3 2c0 5 3 8 8 7M4 3l6 6M9 3l3 3M3 13h10"/></svg>
    <svg viewBox="0 0 16 16"><path d="M4.500 4.500h11v7h-11zM10 12v3M7 15h6"/><path d="M.5 1.500h5v4h-5zM3 6v5" fill="#121b24"/></svg>
    <svg viewBox="0 0 16 16"><path d="M1 6v4h2l4 4V2L3 6zM9 6c1 1 1 3 0 4M11 4c2 2 2 6 0 8M13 2c3 3 3 9 0 12"/></svg>
    <span class="lang">CES</span>
    <time>10:17<br>15.10.2018</time>
    <div class="notes"><svg viewBox="0 0 16 16"><path d="M0 0h16v13H5l-2 3v-3H0z" fill="#fff" stroke="none"/><path d="M3 3.500h10M3 6.500h10M3 9.500h6" stroke="#141c26"/></svg><span class="badge">2</span></div>
  </div>
</footer>
</body>
</html>
```
FILE: styles.css
```css
* { box-sizing: border-box; }
body {
  margin: 0;
  padding-bottom: 12px;
  min-height: 100vh;
  display: flex;
  flex-direction: column;
  background: #fff;
  color: #000;
  font: 11px/16px "Open Sans", "Noto Sans", sans-serif;
}
.defs { position: absolute; width: 0; height: 0; }
button {
  margin: 0;
  padding: 0;
  border: 0;
  background: none;
  color: inherit;
  font: inherit;
  display: flex;
  align-items: center;
  justify-content: center;
}
svg { display: block; fill: none; }

/* title and menu */
.titlebar { display: flex; align-items: center; height: 23px; padding: 0 2px; color: #999; }
.logo { width: 16px; height: 16px; shape-rendering: crispEdges; }
.titlebar h1 { margin: 0 auto 0 5px; font-size: 11px; font-weight: 400; }
.winctl { display: flex; }
.winctl button { width: 46px; height: 22px; }
.winctl svg { width: 12px; height: 12px; stroke: #888; shape-rendering: crispEdges; }
.winctl .smooth { shape-rendering: auto; }
.menubar {
  display: flex;
  align-items: center;
  gap: 1px;
  height: 22px;
  padding: 0 0 2px 7px;
  color: #6d6d6d;
  border-bottom: 1px solid #a0a0a0;
}
.menubar > button { padding: 0 7px; }
.mdictl { margin-left: auto; display: flex; gap: 1px; padding-right: 1px; }
.mdictl button { width: 18px; height: 18px; background: #e5e7e9; }
.mdictl svg { width: 10px; height: 10px; stroke: #8f9fb2; }

/* toolbars */
.toolbar, .layerbar { display: flex; align-items: center; background: #f0f0f0; }
.toolbar { height: 30px; padding-left: 9px; border-bottom: 2px solid #6c6c6c; box-shadow: inset 0 1px #fff; }
.toolbar button, .layerbar button { width: 23px; height: 22px; flex: none; }
.toolbar button svg, .layerbar button svg, .sidebar button svg {
  width: 16px;
  height: 16px;
  stroke: #000;
  shape-rendering: crispEdges;
}
.toolbar button:disabled svg, .layerbar button:disabled svg, .sidebar button:disabled svg { stroke: #a0a0a0; }
.toolbar .on, .layerbar .on { background: #c4e0f5; border: 1px solid #90c8f6; }
.grip { width: 3px; height: 22px; background: #fff; border-right: 1px solid #a0a0a0; flex: none; }
.toolbar .grip { margin: 0 7px 0 4px; }
.sep { width: 1px; height: 20px; margin: 0 3px 0 4px; background: #8c8c8c; flex: none; }
.end { width: 1px; align-self: stretch; background: #a0a0a0; margin-left: 7px; }

/* workspace */
.workspace { flex: 1; display: flex; min-height: 0; }
.sidebar {
  width: 31px;
  padding-top: 55px;
  display: flex;
  flex-direction: column;
  align-items: center;
  background: #f0f0f0;
  border-right: 2px solid #7b7b7b;
}
.sidebar button { width: 22px; height: 22px; flex: none; }
.hgrip { align-self: stretch; height: 14px; border-top: 1px solid #a0a0a0; flex: none; }
.hgrip::after { content: ""; display: block; height: 3px; margin: 3px 3px 0 3px; background: #fff; border-bottom: 1px solid #a0a0a0; }
.hsep { width: 20px; height: 1px; margin: 4px 0 3px; background: #a0a0a0; flex: none; }
.hend { align-self: stretch; height: 1px; margin-top: 7px; background: #a0a0a0; }
.document {
  position: relative;
  flex: 1;
  min-width: 0;
  display: grid;
  grid-template-columns: minmax(0, 1fr) 16px;
  grid-template-rows: minmax(0, 1fr) 16px;
  padding-right: 2px;
  background: #f0f0f0;
}
.plan { width: 100%; height: 100%; background: #fff; shape-rendering: crispEdges; }
.plan svg { overflow: visible; }
.plan path, .plan circle { vector-effect: non-scaling-stroke; }
.blue { stroke: #1414a0; }
.rail { stroke: #000; }
.red { stroke: #d02040; stroke-width: 2; }
.stop { fill: #000; stroke: none; }
.cover { stroke: #fff; stroke-width: 9; }
.dot { stroke: #000; stroke-width: 3; stroke-linecap: square; }
.pin { stroke: #fff; stroke-width: 1; stroke-linecap: square; }
.bluedots { stroke: #1414c0; }
.shed { stroke: #0000c8; }
.lamp { fill: #ff0; stroke: #000; shape-rendering: auto; }
.dim text {
  fill: #2626b4;
  font: 13px "Liberation Sans", Arial, sans-serif;
  text-anchor: middle;
  dominant-baseline: central;
}
.vscroll, .hscroll { display: flex; justify-content: space-between; background: #f0f0f0; }
.vscroll { flex-direction: column; }
.hscroll { grid-column: 1; }
.vscroll button, .hscroll button { width: 16px; height: 16px; flex: none; }
.vscroll svg, .hscroll svg { width: 9px; height: 9px; stroke: #505050; stroke-width: 2; }
.vthumb { width: 15px; height: 47px; margin-bottom: 40px; background: #cdcdcd; }
.hthumb { width: 210px; height: 15px; margin-right: 87px; background: #cdcdcd; }

.palette {
  position: absolute;
  left: 7px;
  top: 8px;
  width: 98px;
  height: 41px;
  overflow: hidden;
  background: #fff;
  border-top: 1px solid #7b3f92;
  box-shadow: 1px 3px 10px rgba(0, 0, 0, .45);
}
.palette-head { display: flex; align-items: center; justify-content: space-between; height: 31px; padding: 0 1px 0 8px; }
.palette-head button { width: 19px; height: 19px; background: #c75050; color: #fff; font-weight: 700; line-height: 16px; padding-bottom: 2px; }
.palette-select { width: 98px; height: 21px; padding: 0 4px; justify-content: space-between; background: #e1e1e1; border: 1px solid #a6a6a6; }
.palette-select svg { width: 9px; height: 9px; stroke: #666; }

.layerbar { height: 31px; padding-left: 2px; border-top: 1px solid #dadada; border-bottom: 1px solid #989898; }
.layerbar .grip { margin-right: 8px; }
.layerbar .layer { position: relative; height: 22px; background: #cbe3f6; border: 1px solid #99d1ff; color: #1c1cb8; line-height: 14px; text-decoration: underline; }
.layer b { width: 15px; height: 15px; background: #c0c0c0; box-shadow: 1px 1px #111; font-weight: 400; }
.current::before { content: ""; position: absolute; left: 2px; top: 2px; width: 4px; height: 4px; background: #000; }
.view i { width: 15px; height: 15px; border: 1px solid #a0a0a0; outline: 1px solid #fff; color: #a0a0a0; font-style: normal; line-height: 13px; }

.statusbar { display: flex; height: 20px; padding: 2px 2px 0; background: #f0f0f0; line-height: 18px; box-shadow: inset 0 1px #fff; }
.hint { flex: 1; }
.coords { width: 275px; }
.cell { border-left: 1px solid #c8c8c8; padding-left: 5px; }
.c1 { width: 70px; }
.c2 { width: 46px; }
.c3 { width: 45px; }

/* taskbar */
.taskbar { display: flex; height: 40px; background: #121b24; color: #fff; }
.pins { display: flex; padding-right: 6px; }
.pins button { width: 49px; padding-right: 2px; }
.pins svg, .task svg { width: 24px; height: 24px; flex: none; }
.task { width: 152px; margin-right: 8px; justify-content: flex-start; padding-left: 6px; gap: 4px; border-bottom: 2px solid #e29be8; white-space: nowrap; }
.pins + .task { margin-left: -2px; }
.task.active { width: 160px; margin-left: -3px; padding-left: 10px; background: linear-gradient(90deg, #454c54, #4e5459); }
.tray { margin-left: auto; display: flex; align-items: center; gap: 8px; padding-right: 3px; }
.tray > svg { width: 16px; height: 16px; stroke: #fff; }
.tray .people { margin-right: 14px; }
.lang { margin-left: 4px; }
.tray time { text-align: center; line-height: 18px; margin-left: 2px; }
.notes { position: relative; width: 44px; height: 40px; padding: 12px 0 0 7px; border-right: 1px solid #5a6068; }
.notes svg { width: 16px; height: 16px; }
.badge { position: absolute; left: 14px; top: 19px; width: 16px; height: 16px; border: 1px solid #aaa; border-radius: 8px; background: #333; line-height: 14px; text-align: center; }
```
